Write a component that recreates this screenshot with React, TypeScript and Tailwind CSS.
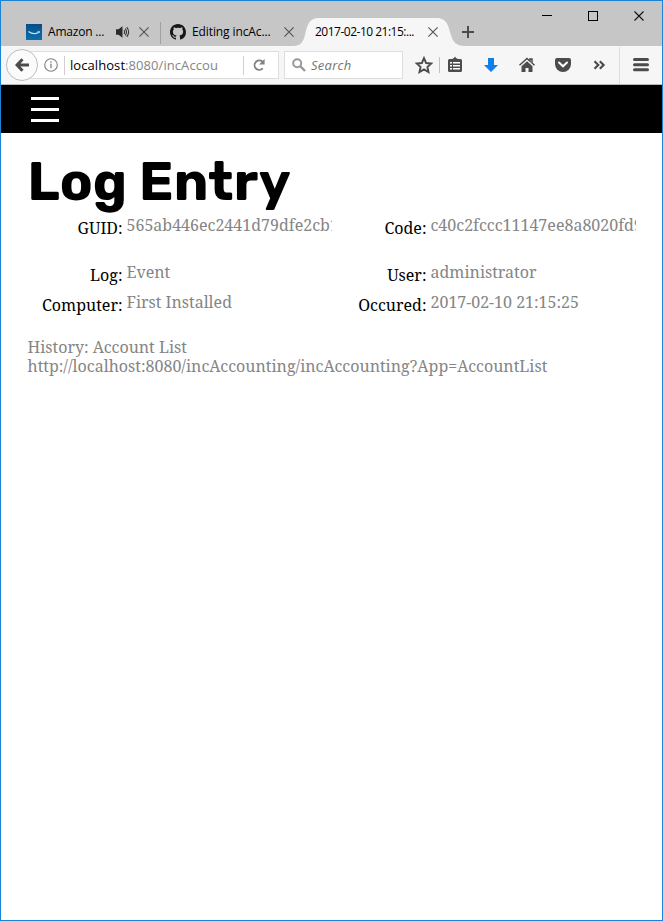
import type { ReactNode } from 'react';

function CloseX({ size = 10, stroke = '#555' }: { size?: number; stroke?: string }) {
  return (
    <svg width={size} height={size} viewBox="0 0 10 10" className="shrink-0">
      <path d="M.4 .4 9.6 9.6M9.6 .4 .4 9.6" stroke={stroke} strokeWidth="1.15" fill="none" />
    </svg>
  );
}

function AmazonIcon() {
  return (
    <svg width="16" height="16" viewBox="0 0 16 16" className="shrink-0">
      <defs>
        <linearGradient id="am" x1="0" y1="0" x2="0" y2="1">
          <stop offset="0" stopColor="#0a4d83" />
          <stop offset="1" stopColor="#0870b0" />
        </linearGradient>
      </defs>
      <rect width="16" height="16" fill="url(#am)" />
      <path d="M2.5 7.4Q7.5 11.5 12.7 8.3" stroke="#c5e3f4" strokeWidth="1.3" fill="none" />
      <path d="M11.5 7.4h2.2l-.5 1.8" stroke="#c5e3f4" strokeWidth=".8" fill="none" />
    </svg>
  );
}

function SpeakerIcon() {
  return (
    <svg width="14" height="12" viewBox="0 0 14 12" className="shrink-0">
      <path d="M0 3.3h2.5L6.5 .3v11.4L2.500 8.700H0z" fill="#2a2a2a" />
      <path d="M8 4Q9.3 6 8 8M9.3 2.6Q11.7 6 9.3 9.4M10.7 1.2Q14.6 6 10.7 10.8" stroke="#333" strokeWidth="1.05" fill="none" />
    </svg>
  );
}

function GithubIcon() {
  return (
    <svg width="16" height="16" viewBox="0 0 16 16" className="shrink-0">
      <path
        fill="#181616"
        d="M8 0C3.58 0 0 3.58 0 8c0 3.54 2.29 6.53 5.47 7.59.4.07.55-.17.55-.38 0-.19-.01-.82-.01-1.49-2.01.37-2.53-.49-2.69-.94-.09-.23-.48-.94-.82-1.13-.28-.15-.68-.52-.01-.53.63-.01 1.08.58 1.23.82.72 1.21 1.87.87 2.33.66.07-.52.28-.87.51-1.07-1.78-.2-3.64-.89-3.64-3.95 0-.87.31-1.59.82-2.15-.08-.2-.36-1.02.08-2.12 0 0 .67-.21 2.2.82.64-.18 1.32-.27 2-.27s1.36.09 2 .27c1.53-1.04 2.2-.82 2.2-.82.44 1.1.16 1.92.08 2.12.51.56.82 1.27.82 2.15 0 3.07-1.87 3.75-3.65 3.95.29.25.54.73.54 1.48 0 1.07-.01 1.93-.01 2.2 0 .21.15.46.55.38A8.01 8.01 0 0 0 16 8c0-4.42-3.58-8-8-8z"
      />
    </svg>
  );
}

function TabStrip() {
  return (
    <div className="flex h-[45px] bg-[#c6c6c6] pl-[25px] text-[12px] leading-[28px] text-black">
      <div className="mt-[17px] flex h-7 w-[134px] items-center">
        <AmazonIcon />
        <span className="ml-[6px] w-[68px] whitespace-nowrap tracking-[-0.2px]">Amazon ...</span>
        <SpeakerIcon />
        <span className="ml-[9px] flex"><CloseX /></span>
      </div>
      <div className="mt-[21px] h-[22px] w-px bg-[#a0a0a0]" />
      <div className="mt-[17px] flex h-7 w-[132px] items-center pl-[9px]">
        <GithubIcon />
        <span className="ml-[6px] w-[92px] shrink-0 whitespace-nowrap tracking-[-0.1px]">Editing incAc...</span>
        <CloseX />
      </div>
      <div className="relative mt-[17px] h-7 w-[174px]">
        <svg width="174" height="28" viewBox="0 0 174 28" className="absolute inset-0">
          <path d="M0 28C8 28 10 24 12 17C14 7 16 0 26 0H143C154 0 155 7 158 17C160 24 163 28 172 28Z" fill="#f6f6f6" />
        </svg>
        <div className="relative flex h-7 items-center pl-[22px]">
          <span className="w-[113px] whitespace-nowrap tracking-[-0.5px]">2017-02-10 21:15:...</span>
          <CloseX />
        </div>
      </div>
      <svg width="12" height="12" viewBox="0 0 12 12" className="mt-[25px] -ml-[5px]">
        <path d="M6 0v12M0 6h12" stroke="#4c4c4c" strokeWidth="2" />
      </svg>
      <div className="ml-auto flex pt-[10px] pr-[17px]">
        <svg width="103" height="10" viewBox="0 0 103 10" shapeRendering="crispEdges">
          <path d="M0 4.5h10" stroke="#000" />
          <path d="M46.5 .5h9v9h-9z" stroke="#000" fill="none" />
          <path d="M92.5 .5l9 9M101.5 .5l-9 9" stroke="#111" shapeRendering="auto" fill="none" strokeWidth="1.1" />
        </svg>
      </div>
    </div>
  );
}

function Toolbar() {
  return (
    <div className="flex h-[39px] items-center border-b border-[#b8b8b8] bg-[#f6f6f6] pl-[5px]">
      <div className="z-10 flex h-8 w-8 shrink-0 items-center justify-center rounded-full border border-[#bdbdbd] bg-[#fbfbfb]">
        <svg width="14" height="14" viewBox="0 0 14 14">
          <path d="M7.5 1.2 2 7l5.5 5.8M2.3 7H14" stroke="#4c4c4c" strokeWidth="3" fill="none" />
        </svg>
      </div>
      <div className="-ml-2 flex h-[28px] w-[249px] shrink-0 items-center border border-[#dedede] bg-white pl-[13px] text-[13px]">
        <svg width="14" height="14" viewBox="0 0 14 14" className="shrink-0">
          <circle cx="7" cy="7" r="6.3" fill="none" stroke="#808080" strokeWidth="1.1" />
          <path d="M7 5.8v4.5M7 3.2v1.5" stroke="#808080" strokeWidth="1.3" />
        </svg>
        <div className="ml-[6px] h-[19px] w-px bg-[#d0d0d0]" />
        <span className="ml-[5px] w-[173px] whitespace-nowrap pt-[2px] tracking-[0.07px] text-[#858585]"><span className="text-black">localhost</span>:8080/incAccou</span>
        <div className="h-[19px] w-px bg-[#d0d0d0]" />
        <svg width="12" height="12" viewBox="0 0 12 12" className="ml-[9px]">
          <path d="M9.8 9.3A4.7 4.7 0 1 1 9.300 2.600L10 3.500" fill="none" stroke="#828282" strokeWidth="1.9" />
          <path d="M11.6 0v5.600H6z" fill="#828282" />
        </svg>
      </div>
      <div className="ml-[5px] flex h-[28px] w-[119px] shrink-0 items-center border border-[#dedede] bg-white pl-[7px] text-[13px]">
        <svg width="14" height="14" viewBox="0 0 14 14">
          <circle cx="5.2" cy="5.2" r="4" fill="none" stroke="#999" strokeWidth="2" />
          <path d="M8.2 8.2 13 13" stroke="#999" strokeWidth="2.4" />
        </svg>
        <span className="ml-[5px] pt-[2px] italic tracking-[0.25px] text-[#757575]">Search</span>
      </div>
      <svg width="260" height="38" viewBox="403 46 260 38" className="shrink-0">
        <g fill="#4c4c4c">
          <path d="M424 58.2l2.1 4.8 5.1.5-3.800 3.500 1.100 5-4.500-2.600-4.500 2.600 1.100-5-3.800-3.500 5.100-.5z" fill="none" stroke="#4c4c4c" strokeWidth="1.9" />
          <path d="M439 57h1v16h-1z" fill="#c2c2c2" />
          <path d="M452 59l2-1 1-1.5 1 1.5 2 1h2.500q1.500 0 1.500 1.500v10q0 1.500-1.500 1.500h-11q-1.500 0-1.500-1.500v-10q0-1.500 1.500-1.500z" />
          <path d="M450 62h2v1.600h-2zM453 62h7v1.600h-7zM450 65h2v1.600h-2zM453 65h7v1.600h-7zM450 68h2v1.600h-2zM453 68h7v1.600h-7z" fill="#fff" />
          <path d="M488 58h6v7h4l-7 7-7-7h4z" fill="#147ee8" />
          <path d="M519.5 65.3 527 58.5l3 2.700V59h2v4l2.500 2.300" fill="none" stroke="#4c4c4c" strokeWidth="1.5" />
          <path d="M527 61.3l5.500 5V72H528.500v-4h-3v4h-4v-5.700z" />
          <path d="M557 58h12q2 0 2 2v4a8 8 0 0 1-16 0v-4q0-2 2-2z" />
          <path d="M559 62.5l4 3.800 4-3.800" stroke="#fff" strokeWidth="2" strokeLinecap="round" fill="none" />
          <path d="M594.5 61.200l3.800 3.800-3.800 3.800M599.800 61.200l3.800 3.800-3.800 3.800" stroke="#4c4c4c" strokeWidth="2.2" fill="none" />
          <path d="M619 47h1v37h-1z" fill="#dedede" />
          <path d="M634.5 59.5h13M634.500 64.700h13M634.500 69.800h13" stroke="#4c4c4c" strokeWidth="3" strokeLinecap="round" />
        </g>
      </svg>
    </div>
  );
}

function Field({ label, children }: { label: string; children: ReactNode }) {
  return (
    <div className="flex w-[304px]">
      <span className="mr-[4px] w-[95px] shrink-0 pt-[3px] text-right text-black">{label}</span>
      <span className="w-[205px] shrink-0 overflow-hidden whitespace-nowrap">{children}</span>
    </div>
  );
}

export default function App() {
  return (
    <div className="flex h-[921px] w-[663px] flex-col overflow-hidden border border-[#1883d7] bg-white font-['Open_Sans','Noto_Sans',sans-serif]">
      <TabStrip />
      <Toolbar />
      <nav className="h-12 shrink-0 bg-black pt-[12px] pl-[29.5px]">
        <div className="flex w-7 flex-col gap-2">
          <div className="h-[3px] bg-white" />
          <div className="h-[3px] bg-white" />
          <div className="h-[3px] bg-white" />
        </div>
      </nav>
      <main className="pl-[26.5px] font-['Noto_Serif','DejaVu_Serif_Condensed','DejaVu_Serif',serif] text-[16px] leading-[19px] text-[#858585]">
        <h1 className="mt-[16px] h-[67px] font-['Rubik','Inter',sans-serif] text-[54px] font-bold leading-[66px] tracking-[0.2px] text-black">Log Entry</h1>
        <div className="flex h-[47px]"><Field label="GUID:">565ab446ec2441d79dfe2cb1</Field><Field label="Code:">c40c2fccc11147ee8a8020fd9</Field></div>
        <div className="flex h-[30px]"><Field label="Log:">Event</Field><Field label="User:">administrator</Field></div>
        <div className="flex h-[30px]"><Field label="Computer:">First Installed</Field><Field label="Occured:">2017-02-10 21:15:25</Field></div>
        <p className="mt-[15px]">History: Account List</p>
        <p className="tracking-[0.01px]">http://localhost:8080/incAccounting/incAccounting?App=AccountList</p>
      </main>
    </div>
  );
}
